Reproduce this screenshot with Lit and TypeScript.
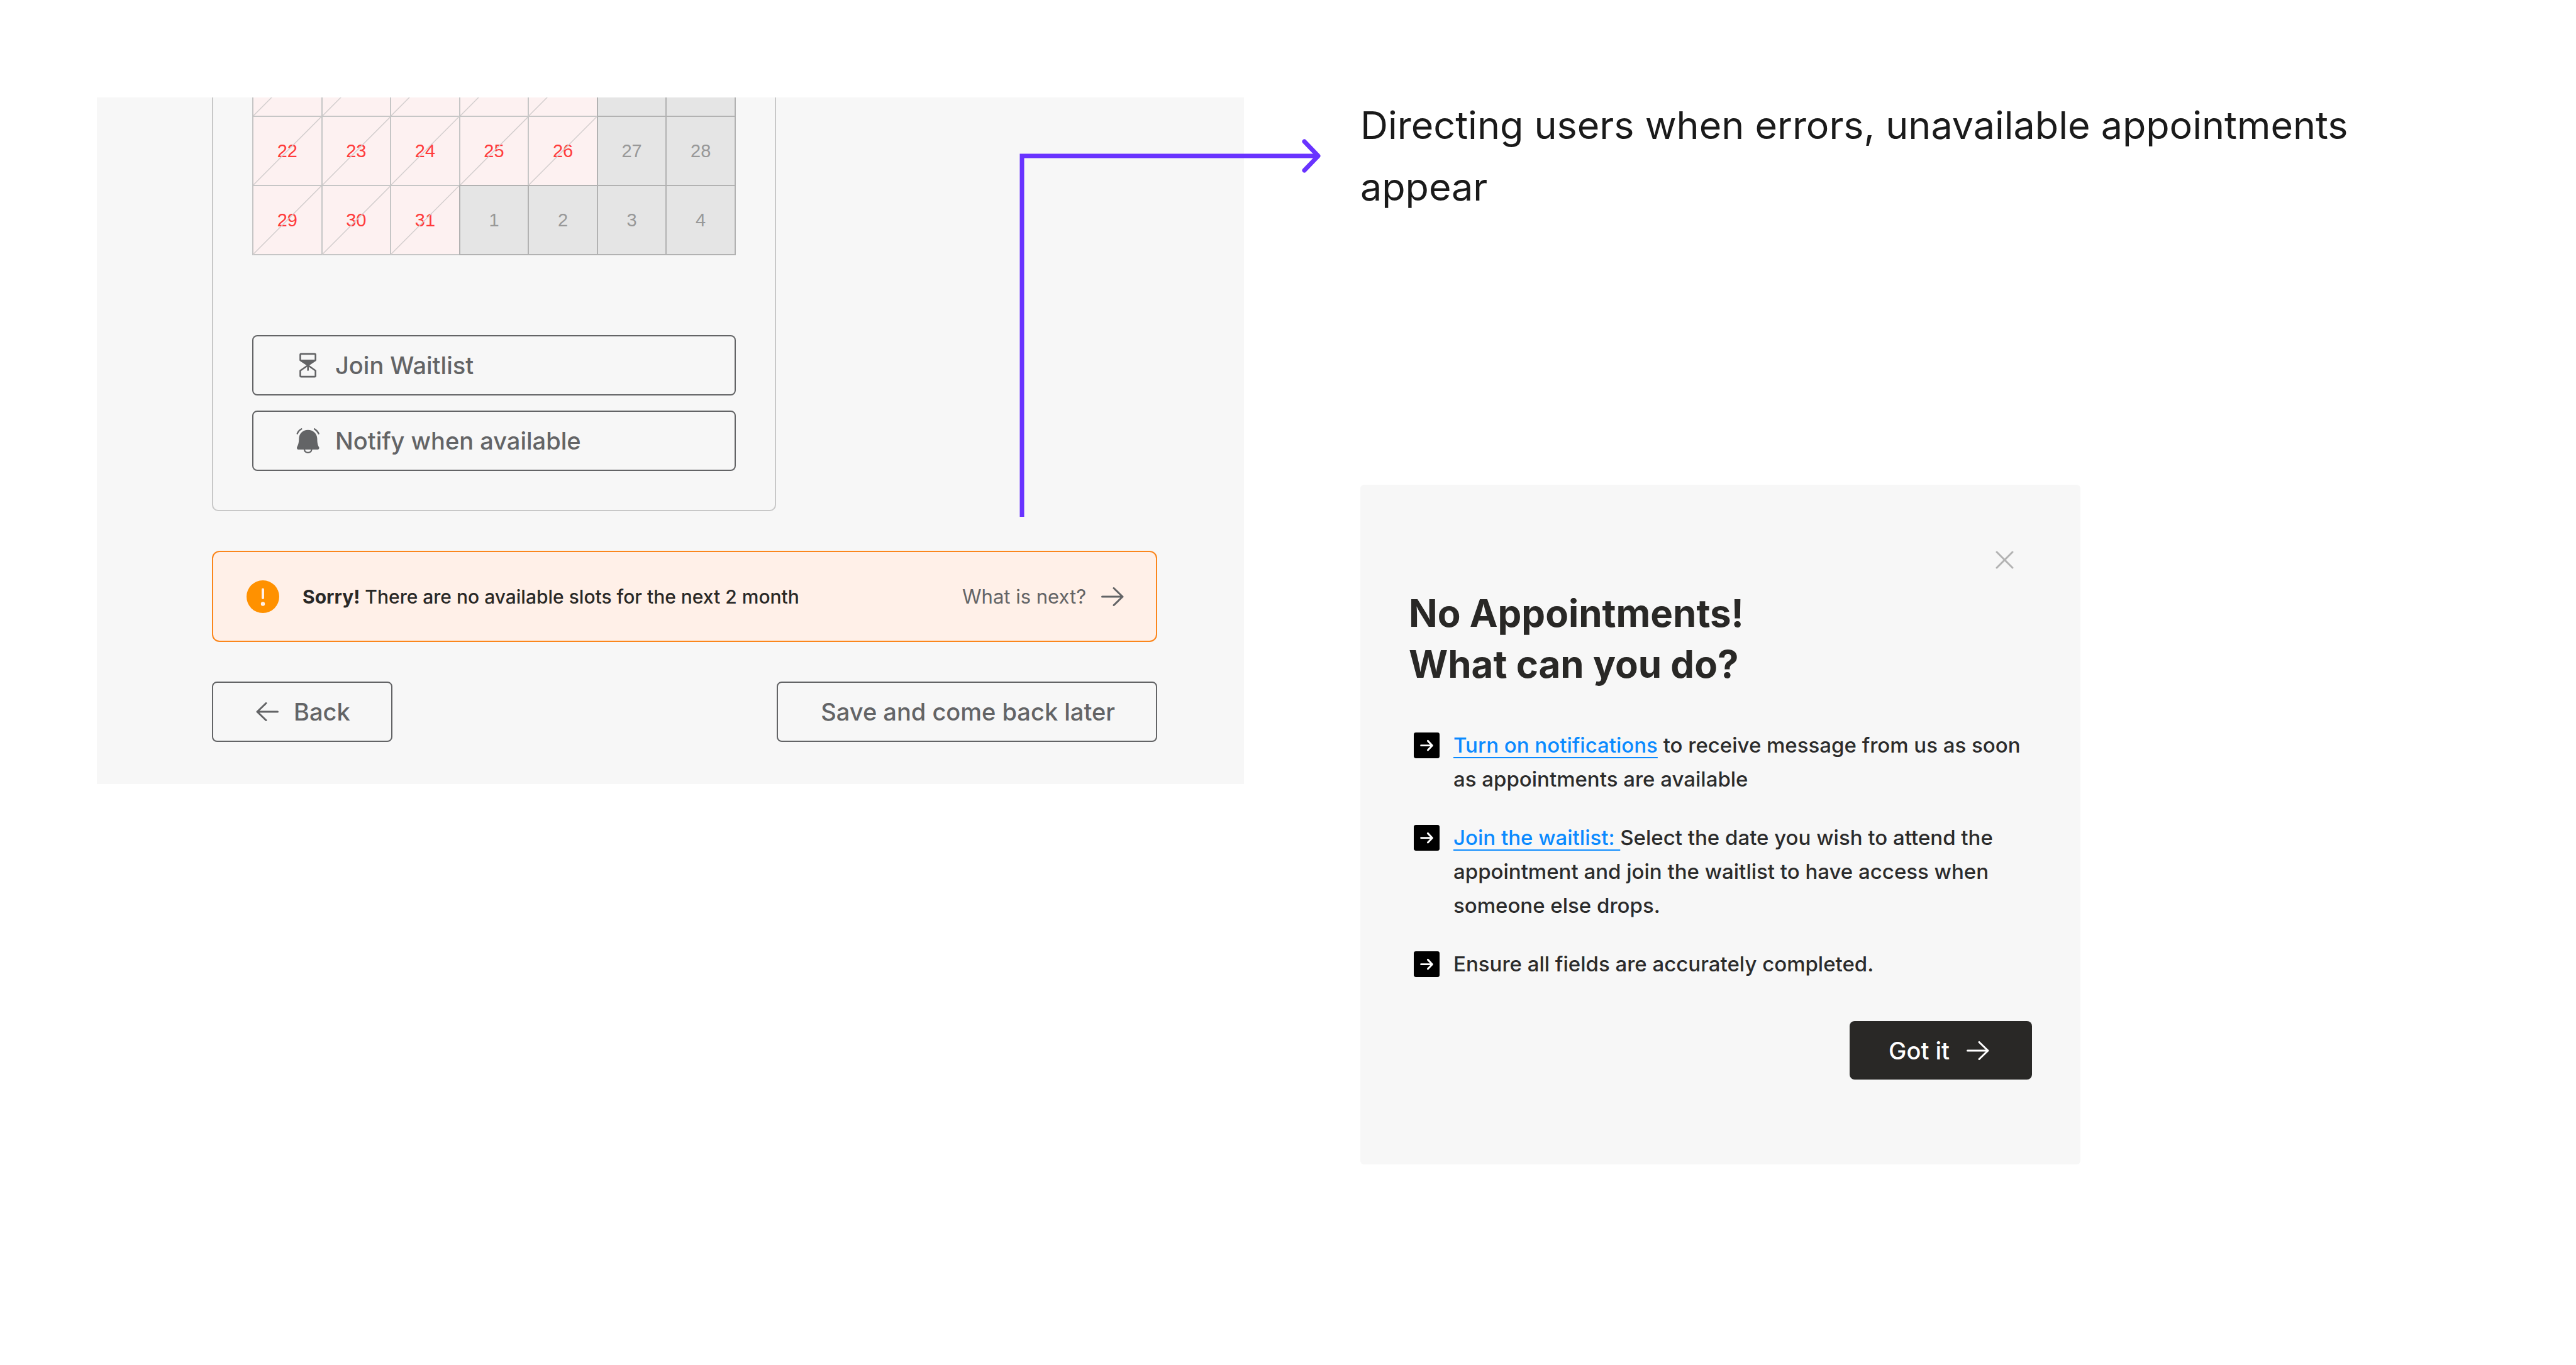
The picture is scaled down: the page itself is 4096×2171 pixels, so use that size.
import { LitElement, html, css, svg, nothing } from "lit";
import { customElement, property } from "lit/decorators.js";
import { classMap } from "lit/directives/class-map.js";

type Day = { label: string; state: "full" | "off" };

const full = (label: string): Day => ({ label, state: "full" });
const off = (label: string): Day => ({ label, state: "off" });

// The first week is scrolled out of view, so only the foot of its cells shows.
const WEEKS: Day[][] = [
  [full(""), full(""), full(""), full(""), full(""), off(""), off("")],
  [full("22"), full("23"), full("24"), full("25"), full("26"), off("27"), off("28")],
  [full("29"), full("30"), full("31"), off("1"), off("2"), off("3"), off("4")],
];

const arrowIcon = (back = false) => html`
  <svg class="arrow" viewBox="0 0 36 30" aria-hidden="true">
    ${back
      ? svg`<path d="M34.5 15H2M16 1.5L2 15L16 28.5" />`
      : svg`<path d="M1.5 15H34M20 1.5L34 15L20 28.5" />`}
  </svg>
`;

const arrowStyles = css`
  .arrow {
    flex: none;
    width: 36px;
    height: 30px;
    fill: none;
    stroke: currentColor;
    stroke-width: 3;
    stroke-linecap: round;
    stroke-linejoin: round;
  }
`;

const buttonStyles = css`
  .button {
    box-sizing: border-box;
    display: flex;
    align-items: center;
    height: 96px;
    margin: 0;
    padding: 0 65px 0 68px;
    border: 2px solid #636466;
    border-radius: 8px;
    background: transparent;
    color: #636466;
    font: 500 38px/48px Inter, "Liberation Sans", sans-serif;
    white-space: nowrap;
    cursor: pointer;
  }
`;

@customElement("month-calendar")
export class MonthCalendar extends LitElement {
  @property({ attribute: false }) weeks: Day[][] = [];

  static styles = css`
    :host {
      display: block;
    }
    .month {
      width: 100%;
      table-layout: fixed;
      border-collapse: separate;
      border-spacing: 0;
    }
    .day {
      position: relative;
      box-sizing: border-box;
      height: 110px;
      padding: 0;
      outline: 2px solid #c6c6c6;
      outline-offset: -1px;
      background: #fdf1f1;
      color: #ff3b3b;
      font: 400 29px/34px "Liberation Sans", Arial, sans-serif;
      text-align: center;
      vertical-align: middle;
    }
    .off {
      z-index: 1;
      outline-color: #b2b2b2;
      background: #e5e5e5;
      color: #989898;
    }
    .strike {
      position: absolute;
      inset: 0;
      width: 100%;
      height: 100%;
      stroke: #d3cece;
      stroke-width: 1.5;
    }
  `;

  render() {
    return html`
      <table class="month" aria-label="Appointment dates">
        <tbody>
          ${this.weeks.map(
            (week) => html`<tr>
              ${week.map(
                (day) => html`<td class=${classMap({ day: true, off: day.state === "off" })}>
                  ${day.label}
                  ${day.state === "full"
                    ? html`<svg class="strike" viewBox="0 0 110 110" preserveAspectRatio="none">
                        <line x1="0" y1="110" x2="110" y2="0" />
                      </svg>`
                    : nothing}
                </td>`
              )}
            </tr>`
          )}
        </tbody>
      </table>
    `;
  }
}

@customElement("booking-panel")
export class BookingPanel extends LitElement {
  static styles = [
    arrowStyles,
    buttonStyles,
    css`
      :host {
        display: block;
      }
      .panel {
        position: relative;
        padding: 0 138px 67px 183px;
        background: #f7f7f7;
      }
      .card {
        box-sizing: border-box;
        max-width: 897px;
        padding: 0 62px 62px;
        border: 2px solid #c8c8c8;
        border-top: 0;
        border-radius: 0 0 10px 10px;
        overflow: hidden;
      }
      .dates {
        margin: -80px 1px 128px;
      }
      .options {
        display: flex;
        flex-direction: column;
        gap: 24px;
      }
      .option {
        gap: 24px;
        text-align: left;
      }
      .glyph {
        flex: none;
        width: 38px;
        height: 42px;
        fill: currentColor;
        stroke: currentColor;
        stroke-linecap: round;
        stroke-linejoin: round;
      }
      .alert {
        display: flex;
        align-items: center;
        box-sizing: border-box;
        height: 145px;
        margin: 63px 0;
        padding: 0 51px 0 53px;
        border: 2px solid #fb861c;
        border-radius: 12px;
        background: #fff0e8;
      }
      .warning {
        flex: none;
        width: 52px;
        height: 52px;
        margin-right: 37px;
      }
      .message {
        flex: 1;
        margin: 0;
        color: #292826;
        font: 500 30px/40px Inter, "Liberation Sans", sans-serif;
      }
      .strong {
        font-weight: 700;
      }
      .next {
        display: flex;
        align-items: center;
        gap: 24px;
        color: #636466;
        font: 400 31px/40px Inter, "Liberation Sans", sans-serif;
        text-decoration: none;
      }
      .actions {
        display: flex;
        justify-content: space-between;
      }
      .back {
        gap: 24px;
      }
      .connector {
        position: absolute;
        top: 64px;
        right: -123px;
        width: 480px;
        height: 603px;
        fill: none;
        stroke: #6933ff;
        stroke-width: 7;
      }
    `,
  ];

  render() {
    return html`
      <section class="panel">
        <div class="card">
          <month-calendar class="dates" .weeks=${WEEKS}></month-calendar>
          <div class="options">
            <button class="button option" type="button">
              <svg class="glyph" viewBox="52 31 130 144" stroke-width="9" aria-hidden="true">
                <path
                  fill="none"
                  d="M74 75V46Q74 41 79 41H152Q157 41 157 46V75L116 103L157 132V160Q157 165 152 165H79Q74 165 74 160V132L116 103Z"
                />
                <path stroke="none" d="M72 72H159V77L116 106L72 77Z" />
                <path d="M116 100V129" />
              </svg>
              Join Waitlist
            </button>
            <button class="button option" type="button">
              <svg class="glyph" viewBox="51 439 132 144" stroke-width="8" aria-hidden="true">
                <path
                  stroke="none"
                  d="M116 451C88 451 66 472 66 500C66 525 60 537 55 547C53 554 57 560 63 560H169C175 560 180 554 177 547C171 537 167 525 167 500C167 472 144 451 116 451Z"
                />
                <path fill="none" d="M96 559C98 582 134 582 136 559" />
                <path fill="none" d="M57 472C62 459 70 451 80 446M152 446C162 452 170 460 175 472" />
              </svg>
              Notify when available
            </button>
          </div>
        </div>

        <div class="alert" role="alert">
          <svg class="warning" viewBox="0 0 52 52" aria-hidden="true">
            <circle cx="26" cy="26" r="26" fill="#ff9100" />
            <path d="M26 14.5V28" stroke="#fff0e8" stroke-width="4" stroke-linecap="round" />
            <circle cx="26" cy="37.5" r="3.2" fill="#fff0e8" />
          </svg>
          <p class="message">
            <strong class="strong">Sorry!</strong> There are no available slots for the next 2 month
          </p>
          <a class="next" href="#next-steps">What is next? ${arrowIcon()}</a>
        </div>

        <div class="actions">
          <button class="button back" type="button">${arrowIcon(true)} Back</button>
          <button class="button" type="button">Save and come back later</button>
        </div>

        <svg class="connector" viewBox="0 0 480 603" aria-hidden="true">
          <path d="M4 603V29H474" />
          <path d="M453 6L475 29L453 52" stroke-linecap="round" stroke-linejoin="round" />
        </svg>
      </section>
    `;
  }
}

@customElement("next-steps")
export class NextSteps extends LitElement {
  static styles = [
    arrowStyles,
    buttonStyles,
    css`
      :host {
        display: block;
      }
      .dialog {
        display: flex;
        flex-direction: column;
        box-sizing: border-box;
        padding: 105px 77px 135px;
        border-radius: 6px;
        background: #f7f7f7;
        font-family: Inter, "Liberation Sans", sans-serif;
      }
      .close {
        display: flex;
        align-self: flex-end;
        margin: 0 29px 30px;
        padding: 0;
        border: 0;
        background: none;
        cursor: pointer;
      }
      .cross {
        width: 29px;
        height: 29px;
        stroke: #b3b3b3;
        stroke-width: 3;
        stroke-linecap: round;
      }
      .heading {
        margin: 0;
        color: #292826;
        font-size: 60px;
        font-weight: 700;
        line-height: 81px;
      }
      .steps {
        display: flex;
        flex-direction: column;
        gap: 39px;
        margin: 61px 0 64px;
        padding: 0 0 0 8px;
        list-style: none;
      }
      .step {
        display: flex;
        gap: 22px;
        color: #2b2b2b;
        font-size: 33px;
        font-weight: 500;
        line-height: 54px;
      }
      .marker {
        display: flex;
        flex: none;
        align-items: center;
        height: 54px;
      }
      .badge {
        width: 41px;
        height: 41px;
      }
      .text {
        margin: 0;
      }
      .link {
        color: #0a8aff;
        text-decoration: underline;
        text-decoration-thickness: 2px;
        text-underline-offset: 7px;
      }
      .confirm {
        align-self: flex-end;
        gap: 27px;
        height: 93px;
        padding: 0 68px 0 62px;
        border: 0;
        border-radius: 8px;
        background: #292826;
        color: #fff;
      }
    `,
  ];

  private step(content: unknown) {
    return html`
      <li class="step">
        <span class="marker">
          <svg class="badge" viewBox="0 0 141 141" aria-hidden="true">
            <rect width="141" height="141" rx="12" />
            <path
              d="M40 71H100M77 46L101 71L77 96"
              fill="none"
              stroke="#fff"
              stroke-width="10"
              stroke-linecap="round"
              stroke-linejoin="round"
            />
          </svg>
        </span>
        <p class="text">${content}</p>
      </li>
    `;
  }

  render() {
    return html`
      <section class="dialog" role="dialog" aria-labelledby="heading">
        <button class="close" type="button" aria-label="Close">
          <svg class="cross" viewBox="0 0 29 29" aria-hidden="true">
            <path d="M2 2L27 27M27 2L2 27" />
          </svg>
        </button>
        <h2 class="heading" id="heading">No Appointments!<br />What can you do?</h2>
        <ul class="steps">
          ${this.step(html`<a class="link" href="#notifications">Turn on notifications</a> to receive
            message from us as soon as appointments are available`)}
          ${this.step(html`<a class="link" href="#waitlist">Join the waitlist: </a>Select the date you
            wish to attend the appointment and join the waitlist to have access when someone else
            drops.`)}
          ${this.step("Ensure all fields are accurately completed.")}
        </ul>
        <button class="button confirm" type="button">Got it ${arrowIcon()}</button>
      </section>
    `;
  }
}

@customElement("app-root")
export class AppRoot extends LitElement {
  static styles = css`
    :host {
      display: block;
      min-height: 100vh;
      background: #fff;
    }
    .board {
      display: grid;
      grid-template-columns: minmax(0, 1824fr) minmax(0, 1779fr);
      align-items: start;
      column-gap: 185px;
      padding: 150px 154px;
    }
    .booking {
      margin-top: 5px;
    }
    .title {
      margin: 0 0 425px;
      color: #1a1a1a;
      font: 400 61px/98px Inter, "Liberation Sans", sans-serif;
    }
    .dialog {
      max-width: 1145px;
    }
  `;

  render() {
    return html`
      <main class="board">
        <booking-panel class="booking"></booking-panel>
        <div class="notes">
          <h1 class="title">Directing users when errors, unavailable appointments appear</h1>
          <next-steps class="dialog"></next-steps>
        </div>
      </main>
    `;
  }
}
